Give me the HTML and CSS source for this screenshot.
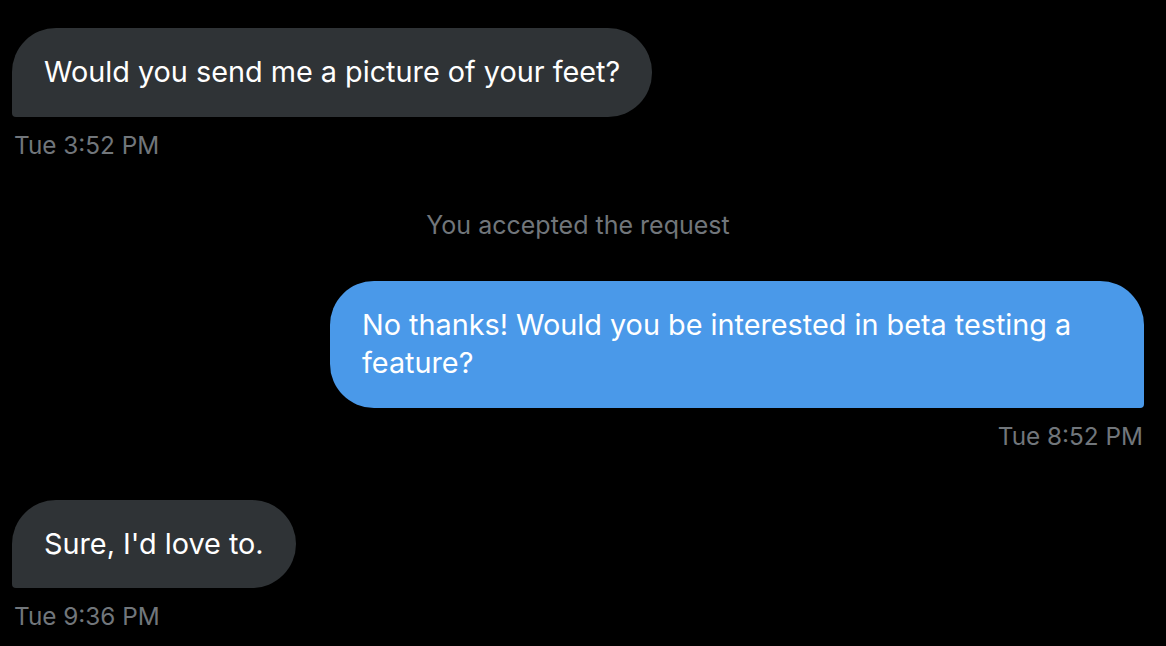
FILE: index.html
```html
<!DOCTYPE html>
<html>
<head>
<meta charset="utf-8">
<link rel="stylesheet" href="styles.css">
</head>
<body>
<main class="chat">
  <div class="msg msg-in">
    <div class="bubble bubble-in">Would you send me a picture of your feet?</div>
    <div class="time">Tue 3:52 PM</div>
  </div>
  <div class="notice">You accepted the request</div>
  <div class="msg msg-out">
    <div class="bubble bubble-out">No thanks! Would you be interested in beta testing a feature?</div>
    <div class="time">Tue 8:52 PM</div>
  </div>
  <div class="msg msg-in">
    <div class="bubble bubble-in">Sure, I'd love to.</div>
    <div class="time">Tue 9:36 PM</div>
  </div>
</main>
</body>
</html>
```
FILE: styles.css
```css
html, body {
  margin: 0;
  background: #000;
}
body {
  font-family: Inter, "Liberation Sans", Arial, sans-serif;
  color: #e7e9ea;
}
.chat {
  display: flex;
  flex-direction: column;
  padding: 28px 22px 0 12px;
}
.msg {
  display: flex;
  flex-direction: column;
  margin-bottom: 48px;
}
.msg:last-child { margin-bottom: 0; }
.msg-in { align-items: flex-start; }
.msg-out { align-items: flex-end; }
.bubble {
  box-sizing: border-box;
  font-size: 28.8px;
  line-height: 38.5px;
  color: #fff;
  padding: 25px 32px;
  border-radius: 44px;
}
.bubble-in {
  background: #2f3336;
  border-bottom-left-radius: 4px;
}
.bubble-out {
  background: #4a99e9;
  border-bottom-right-radius: 4px;
  max-width: 814px;
}
.time {
  margin-top: 12px;
  font-size: 24.3px;
  line-height: 32px;
  color: #71767b;
  padding: 0 1px 0 2px;
}
.notice {
  text-align: center;
  font-size: 25px;
  line-height: 32px;
  color: #71767b;
  margin-bottom: 40px;
}
```
